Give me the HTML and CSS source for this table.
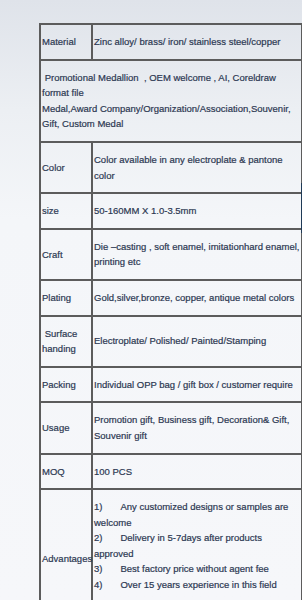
FILE: index.html
```html
<!DOCTYPE html>
<html>
<head>
<meta charset="utf-8">
<link rel="stylesheet" href="styles.css">
</head>
<body>
<div class="page">
  <table class="spec">
    <colgroup><col class="c1"><col class="c2"></colgroup>
    <tr><td class="lbl">Material</td><td>Zinc alloy/ brass/ iron/ stainless steel/copper</td></tr>
    <tr><td colspan="2" class="wide">&nbsp;Promotional Medallion &nbsp;, OEM welcome , AI, Coreldraw format file<br>Medal,Award Company/Organization/Association,Souvenir, Gift, Custom Medal</td></tr>
    <tr><td class="lbl">Color</td><td>Color available in any electroplate &amp; pantone color</td></tr>
    <tr><td class="lbl">size</td><td>50-160MM X 1.0-3.5mm</td></tr>
    <tr><td class="lbl">Craft</td><td>Die –casting , soft enamel, imitationhard enamel, printing etc</td></tr>
    <tr><td class="lbl">Plating</td><td>Gold,silver,bronze, copper, antique metal colors</td></tr>
    <tr><td class="lbl">&nbsp;Surface handing</td><td>Electroplate/ Polished/ Painted/Stamping</td></tr>
    <tr><td class="lbl">Packing</td><td>Individual OPP bag / gift box / customer require</td></tr>
    <tr><td class="lbl">Usage</td><td>Promotion gift, Business gift, Decoration&amp; Gift, Souvenir gift</td></tr>
    <tr><td class="lbl">MOQ</td><td>100 PCS</td></tr>
    <tr><td class="lbl adv">Advantages</td><td class="list">
      <div><span class="num">1)</span>Any customized designs or samples are welcome</div>
      <div><span class="num">2)</span>Delivery in 5-7days after products approved</div>
      <div><span class="num">3)</span>Best factory price without agent fee</div>
      <div><span class="num">4)</span>Over 15 years experience in this field</div>
    </td></tr>
  </table>
  <div class="edge"></div>
</div>
</body>
</html>
```
FILE: styles.css
```css
html, body {
  margin: 0;
  padding: 0;
}
body {
  width: 302px;
  height: 600px;
  overflow: hidden;
  background: linear-gradient(to bottom, #dfe3ea 0px, #eceff3 110px, #f4f6f9 220px, #f6f7fa 600px);
  font-family: "Liberation Sans", Arial, sans-serif;
  font-size: 9.5px;
  line-height: 15.6px;
  color: #2c3852;
  -webkit-text-stroke: 0.2px #2c3852;
}
.page {
  position: relative;
  padding: 23px 0 0 39px;
}
.spec {
  border-collapse: collapse;
  table-layout: fixed;
  width: 262px;
}
.c1 { width: 52px; }
.c2 { width: 210px; }
.spec td {
  border: 2px solid #5c5c5c;
  padding: 9px 0 9px 1px;
  vertical-align: middle;
}
.spec td.lbl {
  padding-left: 1px;
  padding-right: 0;
}
.spec td.adv {
  white-space: nowrap;
  padding-top: 35px;
  overflow: visible;
}
.num {
  padding-right: 18px;
}
.edge {
  position: absolute;
  left: 301px;
  top: 183px;
  width: 1px;
  height: 50px;
  background: #1f3a56;
}
```
